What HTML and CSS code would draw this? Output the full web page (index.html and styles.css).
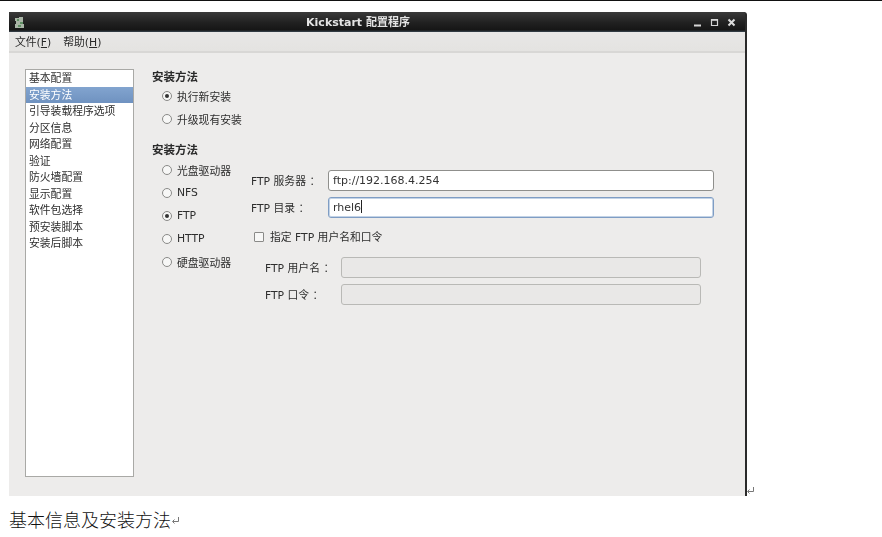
FILE: index.html
```html
<!DOCTYPE html>
<html lang="zh">
<head>
<meta charset="utf-8">
<title>Kickstart 配置程序</title>
<link rel="stylesheet" href="styles.css">
</head>
<body>
<div class="topline"></div>
<div class="shot">
  <div class="window">
    <header class="titlebar">
      <svg class="appicon" width="11" height="13" viewBox="0 0 11 13"><path d="M1 2h4v3H1zM5 1h4v4H5zM2 5h7v3H2zM1 8h4v4H1zM5 8h5v4H5z" fill="#a9b5a6"/><path d="M3 3h2v2H3zM6 6h3v2H6zM4 9h3v2H4z" fill="#5f8f63"/></svg>
      <span class="title">Kickstart 配置程序</span>
      <div class="controls">
        <svg width="9" height="9" viewBox="0 0 9 9"><path d="M1 7.5h7" stroke="#d6d6d6" stroke-width="2"/></svg>
        <svg width="9" height="9" viewBox="0 0 9 9"><path d="M1.5 1.5h6v6h-6z" fill="none" stroke="#d6d6d6" stroke-width="1.2"/><path d="M1 2h7" stroke="#d6d6d6" stroke-width="1.6"/></svg>
        <svg width="9" height="9" viewBox="0 0 9 9"><path d="M1.5 1.5l6 6M7.5 1.5l-6 6" stroke="#dcdcdc" stroke-width="2"/></svg>
      </div>
    </header>
    <nav class="menubar">
      <span>文件(<u>F</u>)</span>
      <span>帮助(<u>H</u>)</span>
    </nav>
    <main class="content">
      <ul class="sidelist">
        <li>基本配置</li>
        <li class="selected">安装方法</li>
        <li>引导装载程序选项</li>
        <li>分区信息</li>
        <li>网络配置</li>
        <li>验证</li>
        <li>防火墙配置</li>
        <li>显示配置</li>
        <li>软件包选择</li>
        <li>预安装脚本</li>
        <li>安装后脚本</li>
      </ul>
      <section class="panel">
        <h2 class="heading">安装方法</h2>
        <div class="radios first">
          <div class="radio on"><i></i>执行新安装</div>
          <div class="radio"><i></i>升级现有安装</div>
        </div>
        <h2 class="heading second">安装方法</h2>
        <div class="lower">
          <div class="radios">
            <div class="radio"><i></i>光盘驱动器</div>
            <div class="radio"><i></i>NFS</div>
            <div class="radio on"><i></i>FTP</div>
            <div class="radio"><i></i>HTTP</div>
            <div class="radio"><i></i>硬盘驱动器</div>
          </div>
          <div class="ftp">
            <div class="field"><label>FTP 服务器 ：</label><div class="input">ftp://192.168.4.254</div></div>
            <div class="field"><label>FTP 目录 ：</label><div class="input focus">rhel6<b class="caret"></b></div></div>
            <div class="check"><i></i>指定 FTP 用户名和口令</div>
            <div class="field sub"><label>FTP 用户名 ：</label><div class="input off"></div></div>
            <div class="field sub"><label>FTP 口令 ：</label><div class="input off"></div></div>
          </div>
        </div>
      </section>
    </main>
  </div>
  <svg class="ret" width="9" height="8" viewBox="0 0 9 8"><path d="M7.5 0v4.5H2M3.5 2.5L1.5 4.5l2 2" fill="none" stroke="#777" stroke-width="1"/></svg>
</div>
<p class="caption">基本信息及安装方法<svg class="ret" width="9" height="8" viewBox="0 0 9 8"><path d="M7.5 0v4.5H2M3.5 2.5L1.5 4.5l2 2" fill="none" stroke="#777" stroke-width="1"/></svg></p>
</body>
</html>
```

FILE: styles.css
```css
* { box-sizing: border-box; }
html, body { margin: 0; padding: 0; background: #fff; }
body { width: 882px; height: 537px; overflow: hidden; font-family: "DejaVu Sans", "Noto Sans CJK SC", sans-serif; font-size: 10.8px; color: #2e2e2e; }
.topline { height: 1px; background: #111; }
.shot { display: flex; align-items: flex-end; margin: 11px 0 0 9px; }
.window { width: 738px; height: 484px; background: #edeceb; border-right: 2px solid #2a2a2a; border-top-right-radius: 3px; filter: blur(0.3px); display: flex; flex-direction: column; }
.ret { display: block; flex: none; margin: 0 0 1px -1px; }
.titlebar { height: 20px; flex: none; background: linear-gradient(#3a3a3a, #202020 55%, #161616 90%, #3a4650); display: flex; align-items: center; padding: 0 9px 0 5px; color: #e4e4e4; font-weight: bold; font-size: 11px; }
.appicon { flex: none; }
.title { flex: 1; text-align: center; padding: 0 2px 2px 0; }
.controls { display: flex; gap: 8px; }
.controls svg { display: block; }
.menubar { height: 21px; flex: none; display: flex; gap: 12px; align-items: center; padding: 0 6px 2px; background: linear-gradient(#e8e7e6, #e4e3e1); border-bottom: 2px solid #d8d7d5; font-size: 10.8px; color: #2a2a2a; }
.content { flex: 1; display: flex; padding: 16px 0 19px 16px; }
.sidelist { list-style: none; margin: 0; padding: 0; width: 109px; flex: none; background: #fff; border: 1px solid #a9a9a6; }
.sidelist li { height: 16.5px; line-height: 18px; padding-left: 3px; white-space: nowrap; overflow: hidden; }
.sidelist .selected { background: linear-gradient(#82a4cf, #6f92c0); color: #fff; }
.panel { width: 570px; margin-left: 18px; }
.heading { margin: 0; height: 16px; line-height: 17px; font-size: 11.5px; font-weight: bold; color: #2a2a2a; }
.second { margin-top: 12px; }
.radios { display: flex; flex-direction: column; padding: 0 0 0 10px; flex: none; width: 99px; }
.radios.first { margin-top: -1px; }
.radio { height: 23px; display: flex; align-items: center; gap: 5px; white-space: nowrap; }
.radio i { width: 10px; height: 10px; flex: none; border: 1px solid #8a8a88; border-radius: 50%; background: #f7f7f6; position: relative; }
.radio.on i::after { content: ""; position: absolute; left: 2px; top: 2px; width: 4px; height: 4px; border-radius: 50%; background: #333; }
.lower { display: flex; }
.ftp { width: 463px; padding-top: 12px; }
.field { display: flex; align-items: center; height: 21px; margin-bottom: 6px; }
.field label { width: 77px; flex: none; padding-bottom: 2px; white-space: nowrap; font-family: "DejaVu Sans", "Noto Sans CJK TC", sans-serif; }
.input { width: 386px; height: 21px; line-height: 19px; padding-left: 4px; border: 1px solid #8f8f8c; border-radius: 3px; background: #fff; font-size: 11px; color: #333; }
.input.focus { border-color: #7f9dc4; box-shadow: 0 0 0 1px #c3d3e6 inset; }
.caret { display: inline-block; width: 1px; height: 13px; background: #222; vertical-align: -2px; }
.check { display: flex; align-items: center; gap: 6px; height: 20px; margin: 8px 0 11px 3px; white-space: nowrap; }
.check i { width: 10px; height: 10px; flex: none; margin-top: 2px; border: 1px solid #8a8a88; border-radius: 1px; background: #f7f7f6; }
.sub { padding-left: 14px; }
.sub label { width: 76px; }
.sub .input { width: 360px; }
.input.off { background: #e9e8e7; border-color: #b9b9b6; }
.caption { margin: 12px 0 0 9px; height: 22px; display: flex; align-items: center; font-family: "Noto Sans CJK SC", sans-serif; font-weight: 300; font-size: 18px; line-height: 22px; color: #111; }
.caption .ret { margin: 4px 0 0 0; }
```
